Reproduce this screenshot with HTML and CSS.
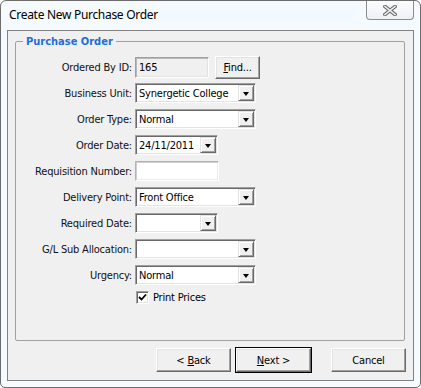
FILE: index.html
```html
<!DOCTYPE html>
<html lang="en">
<head>
    <meta charset="UTF-8">
    <title>Create New Purchase Order</title>
    <link rel="stylesheet" href="styles.css">
</head>
<body>

    <div class="window">
        <div class="titlebar">
            <span class="title">Create New Purchase Order</span>
            <div class="close">
                <svg width="14" height="11" viewBox="0 0 14 11">
                    <path d="M2 1.5 L12 9.5 M12 1.5 L2 9.5" stroke="#6e6e6e" stroke-width="3.6" stroke-linecap="square" fill="none"/>
                    <path d="M2 1.5 L12 9.5 M12 1.5 L2 9.5" stroke="#f4f6f8" stroke-width="1.6" stroke-linecap="square" fill="none"/>
                </svg>
            </div>
        </div>

        <div class="client">
            <fieldset class="group">
                <legend>Purchase Order</legend>

                <div class="row">
                    <label>Ordered By ID:</label>
                    <div class="input readonly w-id">165</div>
                    <button class="btn find"><u>F</u>ind...</button>
                </div>

                <div class="row">
                    <label>Business Unit:</label>
                    <div class="combo w-long"><span>Synergetic College</span><i class="drop"></i></div>
                </div>

                <div class="row">
                    <label>Order Type:</label>
                    <div class="combo w-long"><span>Normal</span><i class="drop"></i></div>
                </div>

                <div class="row">
                    <label>Order Date:</label>
                    <div class="combo w-date"><span>24/11/2011</span><i class="drop"></i></div>
                </div>

                <div class="row">
                    <label>Requisition Number:</label>
                    <div class="input w-req"></div>
                </div>

                <div class="row">
                    <label>Delivery Point:</label>
                    <div class="combo w-long"><span>Front Office</span><i class="drop"></i></div>
                </div>

                <div class="row">
                    <label>Required Date:</label>
                    <div class="combo w-date"><span></span><i class="drop"></i></div>
                </div>

                <div class="row">
                    <label>G/L Sub Allocation:</label>
                    <div class="combo w-long"><span></span><i class="drop"></i></div>
                </div>

                <div class="row">
                    <label>Urgency:</label>
                    <div class="combo w-long"><span>Normal</span><i class="drop"></i></div>
                </div>

                <div class="row check-row">
                    <label></label>
                    <div class="check">
                        <span class="box">
                            <svg width="9" height="9" viewBox="0 0 9 9">
                                <path d="M1 4 L3.5 6.5 L8 1.5" stroke="#000" stroke-width="1.8" fill="none"/>
                            </svg>
                        </span>
                        Print Prices
                    </div>
                </div>
            </fieldset>

            <div class="buttons">
                <button class="btn">&lt; <u>B</u>ack</button>
                <button class="btn default"><u>N</u>ext &gt;</button>
                <button class="btn cancel">Cancel</button>
            </div>
        </div>
    </div>

</body>
</html>
```

FILE: styles.css
```css
body {
    margin: 0;
    font-family: "DejaVu Sans Condensed", "Liberation Sans", sans-serif;
    font-size: 11px;
    letter-spacing: -0.2px;
    color: #000;
    background: #fff;
}

.window {
    width: 421px;
    height: 388px;
    box-sizing: border-box;
    border: 1px solid #6d6d6d;
    border-radius: 6px 6px 5px 5px;
    background: #f4fafd;
    display: flex;
    flex-direction: column;
}

.titlebar {
    height: 29px;
    display: flex;
    align-items: flex-start;
}

.title {
    font-family: "Noto Sans", "Open Sans", sans-serif;
    font-size: 12px;
    letter-spacing: -0.3px;
    line-height: 16px;
    margin: 6px 0 0 8px;
    color: #000;
}

.close {
    margin-left: auto;
    margin-right: 6px;
    width: 48px;
    height: 19px;
    box-sizing: border-box;
    border: 1px solid #8c8c8c;
    border-top: none;
    border-radius: 0 0 4px 4px;
    background: linear-gradient(#fbfcfd, #eef1f4);
    display: flex;
    align-items: center;
    justify-content: center;
}

.client {
    flex: 1;
    margin: 0 6px 6px 6px;
    border: 1px solid #828282;
    background: #f0f0f0;
    display: flex;
    flex-direction: column;
}

.group {
    margin: 4px 8px 0 7px;
    padding: 6px 0 34px 0;
    border: 1px solid #a0a0a0;
    border-radius: 2px;
}

.group legend {
    margin-left: 7px;
    padding: 0 3px;
    font-weight: bold;
    letter-spacing: 0;
    color: #1c6fdc;
    line-height: 13px;
}

.row {
    display: grid;
    grid-template-columns: 116px auto auto;
    justify-content: start;
    column-gap: 3px;
    align-items: center;
    height: 26px;
}

.row label {
    text-align: right;
    color: #111;
}

.check-row {
    height: 18px;
}

.input, .combo {
    height: 20px;
    box-sizing: border-box;
    border: 1px solid;
    border-color: #a0a0a0 #fff #fff #a0a0a0;
    box-shadow: inset 1px 1px #696969, inset -1px -1px #e3e3e3;
    background: #fff;
}

.input {
    padding: 3px 3px 0 3px;
    line-height: 13px;
}

.readonly {
    height: 21px;
    background: #f0f0f0;
    box-shadow: inset 1px 1px #b9b9b9, inset -1px -1px #e3e3e3;
}

.w-id { width: 74px; }
.w-req { width: 84px; border-color: #b4b4b4 #fff #fff #b4b4b4; box-shadow: inset 1px 1px #cfcfcf, inset -1px -1px #ececec; }
.w-long { width: 121px; }
.w-date { width: 83px; }

.combo {
    display: flex;
    align-items: center;
}

.combo span {
    flex: 1;
    padding-left: 3px;
    white-space: nowrap;
    overflow: hidden;
}

.drop {
    width: 16px;
    height: 16px;
    box-sizing: border-box;
    margin-right: 1px;
    border: 1px solid;
    border-color: #e3e3e3 #696969 #696969 #e3e3e3;
    box-shadow: inset 1px 1px #fff, inset -1px -1px #a0a0a0;
    background: #f0f0f0;
    display: flex;
    align-items: center;
    justify-content: center;
}

.drop::after {
    content: "";
    border-left: 3.5px solid transparent;
    border-right: 3.5px solid transparent;
    border-top: 4px solid #000;
    margin-top: 1px;
}

.btn {
    font-family: inherit;
    font-size: 11px;
    letter-spacing: -0.2px;
    color: #000;
    background: #f0f0f0;
    border: 1px solid;
    border-color: #fff #696969 #696969 #fff;
    box-shadow: inset -1px -1px #a0a0a0, inset 1px 1px #e3e3e3;
    padding: 0;
    border-radius: 0;
}

.find {
    width: 45px;
    height: 23px;
    margin-left: 3px;
}

.check {
    display: flex;
    align-items: center;
    gap: 4px;
    color: #000;
}

.box {
    width: 13px;
    height: 13px;
    box-sizing: border-box;
    margin-left: 1px;
    border: 1px solid;
    border-color: #a0a0a0 #fff #fff #a0a0a0;
    box-shadow: inset 1px 1px #696969, inset -1px -1px #e3e3e3;
    background: #fff;
    display: flex;
    align-items: center;
    justify-content: center;
}

.buttons {
    display: flex;
    justify-content: flex-end;
    gap: 5px;
    margin: 7px 7px 0 0;
}

.buttons .btn {
    width: 75px;
    height: 24px;
}

.buttons .default {
    outline: 1px solid #000;
    outline-offset: 0;
}

.buttons .cancel {
    margin-left: 15px;
}
```
